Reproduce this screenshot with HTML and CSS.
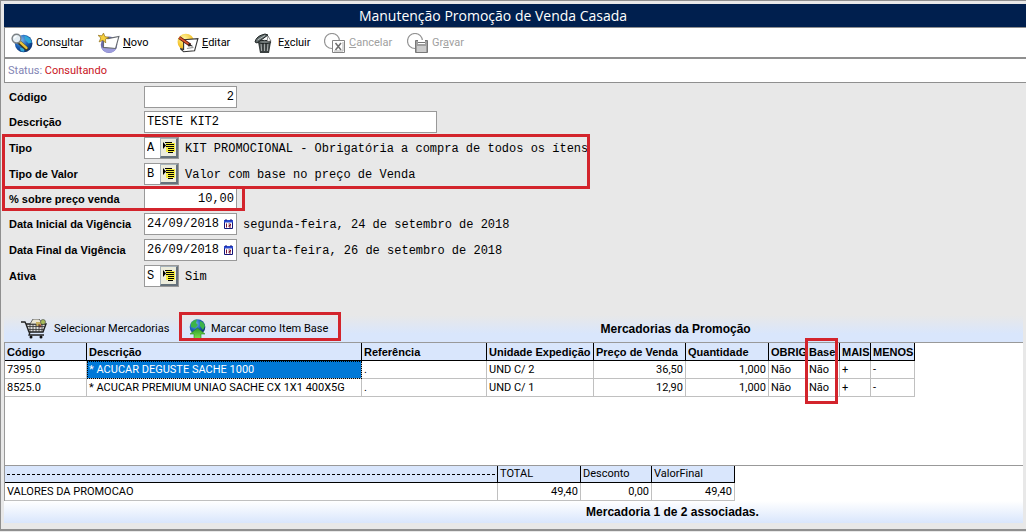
FILE: index.html
```html
<!DOCTYPE html>
<html lang="pt-BR">
<head>
<meta charset="utf-8">
<title>Manutenção Promoção de Venda Casada</title>
<link rel="stylesheet" href="styles.css">
</head>
<body>
<svg class="defs" aria-hidden="true">
  <defs>
    <radialGradient id="globe" cx="0.35" cy="0.3" r="0.8">
      <stop offset="0" stop-color="#7db8f0"/><stop offset="0.5" stop-color="#1c62b8"/><stop offset="1" stop-color="#06245e"/>
    </radialGradient>
    <radialGradient id="sun" cx="0.4" cy="0.3" r="0.8">
      <stop offset="0" stop-color="#fff6a0"/><stop offset="0.6" stop-color="#f5c530"/><stop offset="1" stop-color="#d98e12"/>
    </radialGradient>
    <linearGradient id="arrow" x1="0" y1="0" x2="0" y2="1">
      <stop offset="0" stop-color="#2f9a2a"/><stop offset="1" stop-color="#7be24a"/>
    </linearGradient>
    <symbol id="list" viewBox="0 0 13 14">
      <path d="M4 2h9v9H4z" fill="#f8f03c"/>
      <path d="M1 1v7l3-3.500z" fill="#000"/>
      <path d="M3 1.500h7M4 3.500h8M4 5.500h8M6 7.500h6M6 9.500h6M6 11.500h5" stroke="#000"/>
    </symbol>
    <symbol id="cal" viewBox="0 0 10 11">
      <path d="M.5 1.500h8v8h-8z" fill="#fff" stroke="#141478"/>
      <path d="M0 1h9v2.500H0z" fill="#2a4ad0"/>
      <path d="M2 0v2M7 0v2" stroke="#141478"/>
      <path d="M2.500 4.500v4M4.500 5h2v1.500h-1.500v1.500h2" fill="none" stroke="#7a1030"/>
    </symbol>
  </defs>
</svg>
<div class="window">
  <h1 class="title">Manutenção Promoção de Venda Casada</h1>

  <div class="toolbar">
    <button class="tool tool--consultar" type="button">
      <svg class="icon" viewBox="0 0 20 18">
        <circle cx="11.500" cy="9.500" r="8" fill="url(#globe)"/>
        <path d="M12 2.500q6 1 7 6l-3 1-3-3zM8 13l4 1v3l-3-.5z" fill="#2fa8d8"/>
        <path d="M7 8l7 6" stroke="#3a3a20" stroke-width="3.800" stroke-linecap="round"/>
        <path d="M8 8l6 5.500" stroke="#e9c43c" stroke-width="2.200" stroke-linecap="round"/>
        <circle cx="5" cy="5" r="4" fill="#e4eef4" stroke="#7c8286" stroke-width="1.300"/>
        <path d="M3 5q0-2 2-2" fill="none" stroke="#fff"/>
      </svg>
      <span>Cons<u>u</u>ltar</span>
    </button>
    <button class="tool tool--novo" type="button">
      <svg class="icon" viewBox="0 0 20 18">
        <circle cx="10" cy="10.500" r="7.500" fill="#6a6ab0"/><path d="M3 13a7.500 7.500 0 0 0 14 0z" fill="#9c9cdc"/>
        <path d="M5 4l4 1 10-2-3 11-11-1z" fill="#fff" stroke="#666a70"/>
        <path d="M5 0l1.300 3.200L10 4 6.800 5.500 7 9 4.500 6.500 1 8l1.500-3.500L0 2l3.500.5z" fill="#f6cf3c" stroke="#8a6a18" stroke-width=".6"/>
      </svg>
      <span><u>N</u>ovo</span>
    </button>
    <button class="tool tool--editar" type="button">
      <svg class="icon" viewBox="0 0 20 18">
        <circle cx="8" cy="8" r="7.500" fill="url(#sun)"/>
        <path d="M6 6l13-1-3 11-10 1-3-3 3 1z" fill="#fff" stroke="#333"/>
        <path d="M9 14l6-1M10 12l4-1" stroke="#999"/>
        <path d="M2 4l10 7" stroke="#5c1810" stroke-width="3"/>
        <path d="M2 4l9 6.300" stroke="#e0582c" stroke-width="1.400"/>
        <path d="M11 9l3.500 3.500-4.500-1.500z" fill="#222"/>
      </svg>
      <span><u>E</u>ditar</span>
    </button>
    <button class="tool tool--excluir" type="button">
      <svg class="icon" viewBox="0 0 20 20">
        <path d="M4 9h13l-2 11H6z" fill="#3a4040"/>
        <path d="M7 10l.6 8M10.500 10v8M14 10l-.6 8" stroke="#a4aaaa" stroke-width="1.200"/>
        <ellipse cx="10.500" cy="9" rx="6.500" ry="1.600" fill="#707878" stroke="#202626"/>
        <path d="M1 9Q2 3 11 1l3 1-11 8z" fill="#5e6868" stroke="#202626"/>
        <path d="M3.500 7L11 2.500" stroke="#b8c0c0"/>
        <path d="M14 3l3 5-4 .5z" fill="#fff" stroke="#444" stroke-width=".6"/>
      </svg>
      <span>E<u>x</u>cluir</span>
    </button>
    <button class="tool tool--cancelar" type="button" disabled>
      <svg class="icon" viewBox="0 0 22 20">
        <circle cx="8" cy="8" r="7.500" fill="none" stroke="#949494" stroke-width="1.200"/>
        <path d="M8.500 7.500h12v12h-12z" fill="#fff" stroke="#848484"/><path d="M10 18h9V9" fill="none" stroke="#b0b0b0"/>
        <path d="M11.500 10l5.500 7M17 10l-5.500 7" stroke="#707070" stroke-width="1.500"/>
      </svg>
      <span><u>C</u>ancelar</span>
    </button>
    <button class="tool tool--gravar" type="button" disabled>
      <svg class="icon" viewBox="0 0 22 20">
        <circle cx="8" cy="8" r="7.500" fill="none" stroke="#949494" stroke-width="1.200"/>
        <path d="M8.500 7.500h12v12h-12z" fill="#a0a0a0" stroke="#787878"/>
        <path d="M11 7h7v4h-7z" fill="#fff"/><path d="M11 9.500h7" stroke="#777"/><path d="M10 13h9v6h-9z" fill="#ccc"/>
      </svg>
      <span>Gr<u>a</u>var</span>
    </button>
  </div>

  <div class="status"><span class="status-label">Status:</span> <span class="status-value">Consultando</span></div>

  <form class="form">
    <div class="row row--short">
      <label for="codigo">Código</label>
      <span class="field field--mid"><input id="codigo" class="right" value="2"></span>
    </div>
    <div class="row">
      <label for="descricao">Descrição</label>
      <span class="field field--wide"><input id="descricao" value="TESTE KIT2"></span>
    </div>
    <div class="row">
      <label for="tipo">Tipo</label>
      <span class="field field--code"><input id="tipo" value="A"><button class="pick" type="button" aria-label="Listar tipos"><svg><use href="#list"/></svg></button></span>
      <output>KIT PROMOCIONAL - Obrigatória a compra de todos os ítens</output>
    </div>
    <div class="row row--short">
      <label for="tipovalor">Tipo de Valor</label>
      <span class="field field--code"><input id="tipovalor" value="B"><button class="pick" type="button" aria-label="Listar tipos de valor"><svg><use href="#list"/></svg></button></span>
      <output>Valor com base no preço de Venda</output>
    </div>
    <div class="row row--short">
      <label for="perc">% sobre preço venda</label>
      <span class="field field--mid"><input id="perc" class="right" value="10,00"></span>
    </div>
    <div class="row">
      <label for="inicio">Data Inicial da Vigência</label>
      <span class="field field--mid"><input id="inicio" value="24/09/2018"><button class="cal" type="button" aria-label="Calendário"><svg><use href="#cal"/></svg></button></span>
      <output>segunda-feira, 24 de setembro de 2018</output>
    </div>
    <div class="row">
      <label for="fim">Data Final da Vigência</label>
      <span class="field field--mid"><input id="fim" value="26/09/2018"><button class="cal" type="button" aria-label="Calendário"><svg><use href="#cal"/></svg></button></span>
      <output>quarta-feira, 26 de setembro de 2018</output>
    </div>
    <div class="row">
      <label for="ativa">Ativa</label>
      <span class="field field--code"><input id="ativa" value="S"><button class="pick" type="button" aria-label="Listar opções"><svg><use href="#list"/></svg></button></span>
      <output>Sim</output>
    </div>
    <div class="mark mark--tipo"></div>
    <div class="mark mark--perc"></div>
  </form>

  <section class="items">
    <div class="items-bar">
      <button class="action action--cart" type="button">
        <svg class="cart" viewBox="0 0 26 20">
          <path d="M0 3h4l1 2h20l-3 8H8L5 5" fill="#ddd" stroke="#222" stroke-width="1.400"/>
          <path d="M9 5l3-5h6l4 5z" fill="#e8e4d4" stroke="#444" stroke-width=".8"/>
          <path d="M15 3h5v4h-5z" fill="#c8b060"/><circle cx="22" cy="3" r="2.500" fill="#a8bc58" stroke="#444" stroke-width=".6"/><circle cx="19" cy="7" r="1.500" fill="#b04838"/>
          <path d="M6 7.500h18M7 10.500h16M9 5v8M12 5v8M15 5v8M18 5v8M21 5v8" stroke="#333" stroke-width=".8"/>
          <path d="M9 13l-1 3h15" fill="none" stroke="#222" stroke-width="1.300"/>
          <circle cx="10" cy="18" r="1.500" fill="#111"/><circle cx="20" cy="18" r="1.500" fill="#111"/>
        </svg>
        <span>Selecionar Mercadorias</span>
      </button>
      <button class="action action--base" type="button">
        <svg class="base" viewBox="0 0 17 20">
          <circle cx="8.500" cy="8" r="7.800" fill="url(#globe)"/>
          <path d="M2 4q3-4 6-3.500L7 4l2 2-3 3-4-1zM11 2q4 1 5 5l-2 4-3-4z" fill="#3cb44a"/>
          <path d="M8.500 9l7.500 6h-4v4.500H5V15H1z" fill="url(#arrow)" stroke="#278a22" stroke-width=".6"/>
        </svg>
        <span>Marcar como Item Base</span>
      </button>
      <h2>Mercadorias da Promoção</h2>
      <div class="mark mark--action"></div>
    </div>

    <div class="grid-area">
      <table class="grid">
        <colgroup><col class="c-cod"><col class="c-desc"><col class="c-ref"><col class="c-und"><col class="c-preco"><col class="c-qtd"><col class="c-obrig"><col class="c-base"><col class="c-mais"><col class="c-menos"></colgroup>
        <thead>
          <tr><th>Código</th><th>Descrição</th><th>Referência</th><th>Unidade Expedição</th><th>Preço de Venda</th><th>Quantidade</th><th>OBRIG</th><th>Base</th><th>MAIS</th><th>MENOS</th></tr>
        </thead>
        <tbody>
          <tr><td>7395.0</td><td class="selected">* ACUCAR DEGUSTE SACHE 1000</td><td>.</td><td>UND C/ 2</td><td class="num">36,50</td><td class="num">1,000</td><td>Não</td><td>Não</td><td>+</td><td>-</td></tr>
          <tr><td>8525.0</td><td>* ACUCAR PREMIUM UNIAO SACHE CX 1X1 400X5G</td><td>.</td><td>UND C/ 1</td><td class="num">12,90</td><td class="num">1,000</td><td>Não</td><td>Não</td><td>+</td><td>-</td></tr>
        </tbody>
      </table>
      <div class="mark mark--col"></div>
    </div>

    <div class="totals">
      <table class="grid grid--totals">
        <colgroup><col class="t-label"><col class="t-total"><col class="t-desc"><col class="t-final"></colgroup>
        <thead><tr><th><div class="dashes"></div></th><th>TOTAL</th><th>Desconto</th><th>ValorFinal</th></tr></thead>
        <tbody><tr><td>VALORES DA PROMOCAO</td><td class="num">49,40</td><td class="num">0,00</td><td class="num">49,40</td></tr></tbody>
      </table>
    </div>
    <p class="count">Mercadoria 1 de 2 associadas.</p>
  </section>
</div>
</body>
</html>
```
FILE: styles.css
```css
* { box-sizing: border-box; }

body {
  margin: 0;
  background: #e8e8e8;
  color: #000;
  font: 11px/16px Roboto, sans-serif;
}

.defs { position: absolute; width: 0; height: 0; }

button {
  font: inherit;
  color: inherit;
  background: none;
  border: 0;
  padding: 0;
  white-space: nowrap;
}

.window {
  display: flex;
  flex-direction: column;
  min-height: calc(100vh - 1px);
  padding: 3px 0 6px 3px;
  border: solid #8f8f8f;
  border-width: 1px 0 2px 1px;
}

.title {
  margin: 0;
  background: #001f4e;
  color: #fff;
  font: 14px/23px "Open Sans", sans-serif;
  text-align: center;
  padding-right: 44px;
}

/* Toolbar */
.toolbar {
  display: flex;
  align-items: center;
  height: 32px;
  padding-left: 6px;
  background: #fff;
  border: solid #8f8f8f;
  border-width: 1px 0 2px 1px;
}
.tool { display: flex; align-items: center; gap: 3px; }
.tool:disabled { color: #a0a0a0; }
.icon { width: 22px; height: 20px; }
.tool--consultar { width: 87px; }
.tool--novo { width: 79px; }
.tool--editar { width: 76px; }
.tool--excluir { width: 71px; }
.tool--cancelar { width: 83px; }

.status {
  height: 24px;
  padding-left: 3px;
  line-height: 24px;
  background: #fff;
  border: solid #8f8f8f;
  border-width: 0 0 1px 1px;
}
.status-label { color: #8284b4; }
.status-value { color: #c8141c; }

/* Form */
.form {
  position: relative;
  flex: none;
  padding: 3px 0 24px 5px;
}
.row { display: flex; align-items: flex-start; height: 26px; }
.row--short { height: 25px; }
.row label {
  width: 135px;
  font: bold 11px/22px "Liberation Sans", sans-serif;
}
.row output {
  margin-left: 6px;
  font: 12px/24px "Liberation Mono", monospace;
  white-space: nowrap;
}
.field {
  display: flex;
  height: 22px;
  background: #fff;
  border: 1px solid #999;
}
.field--mid { width: 93px; }
.field--wide { width: 293px; }
.field--code { width: 35px; }
.field input {
  flex: 1;
  min-width: 0;
  height: 20px;
  padding: 0 2px;
  border: 0;
  background: none;
  font: 12px/20px "Liberation Mono", monospace;
  outline: 0;
}
.field .right { text-align: right; }
.pick {
  flex: none;
  width: 18px;
  background: #ececdc;
  border: 2px solid;
  border-width: 1px 2px 2px 1px;
  border-color: #a8b4bc #66727c #66727c #a8b4bc;
}
.pick svg { display: block; width: 13px; height: 14px; margin: 1px; }
.cal { flex: none; width: 15px; }
.cal svg { display: block; width: 10px; height: 11px; margin: 0 auto; }

/* Highlight frames drawn over the controls */
.mark { position: absolute; border: 3px solid #d3242c; pointer-events: none; }
.mark--tipo { left: -2px; top: 51px; width: 588px; height: 55px; }
.mark--perc { left: -2px; top: 103px; width: 243px; height: 25px; }
.mark--action { left: 175px; top: -3px; width: 162px; height: 29px; }
.mark--col { left: 800px; top: -5px; width: 33px; height: 66px; }

/* Items */
.items {
  flex: 1;
  display: flex;
  flex-direction: column;
  margin-right: 3px;
}
.items-bar {
  position: relative;
  display: flex;
  align-items: center;
  height: 27px;
  padding-left: 17px;
  background: linear-gradient(#e8e8e8, #d9e6fc 70%);
}
.action { display: flex; align-items: center; gap: 7px; }
.action--cart { width: 168px; }
.action--base { gap: 5px; }
.cart { width: 26px; height: 20px; }
.base { width: 17px; height: 20px; }
.items-bar h2 {
  margin: 0 auto;
  font: bold 12px/16px "Liberation Sans", sans-serif;
}

.grid-area {
  position: relative;
  flex: 1;
  background: #fff;
  border: solid #999;
  border-width: 1px 0 0 1px;
}
.grid { table-layout: fixed; border-collapse: separate; border-spacing: 0; width: 910px; }
.grid th {
  height: 18px;
  padding: 0 2px;
  background: #d9e6fc;
  border: solid #000;
  border-width: 0 1px 1px 0;
  font: bold 11px/16px "Liberation Sans", sans-serif;
  text-align: left;
  white-space: nowrap;
}
.grid td {
  height: 18px;
  padding: 0 2px;
  border: solid #c0c0c0;
  border-width: 0 1px 1px 0;
  line-height: 16px;
  white-space: nowrap;
}
.grid .num { text-align: right; }
.grid .selected {
  background: #0078d7;
  color: #fff;
  outline: 1px dotted #000;
  outline-offset: -1px;
}
.c-cod { width: 82px; }
.c-desc { width: 275px; }
.c-ref { width: 125px; }
.c-und { width: 107px; }
.c-preco { width: 92px; }
.c-qtd { width: 83px; }
.c-obrig { width: 38px; }
.c-base { width: 33px; }
.c-mais { width: 31px; }
.c-menos { width: 44px; }

.totals { background: #fff; border: solid #999; border-width: 1px 0 0 1px; }
.grid--totals { width: 730px; }
.grid--totals th { height: 17px; font: inherit; }
.t-label { width: 493px; }
.t-total { width: 83px; }
.t-desc { width: 71px; }
.t-final { width: 83px; }
.dashes { border-top: 1px dashed #000; }

.count {
  margin: 0;
  padding: 3px 0 3px 318px;
  background: linear-gradient(#fff, #d9e6fc);
  font: bold 12px/16px "Liberation Sans", sans-serif;
  text-align: center;
}
```
